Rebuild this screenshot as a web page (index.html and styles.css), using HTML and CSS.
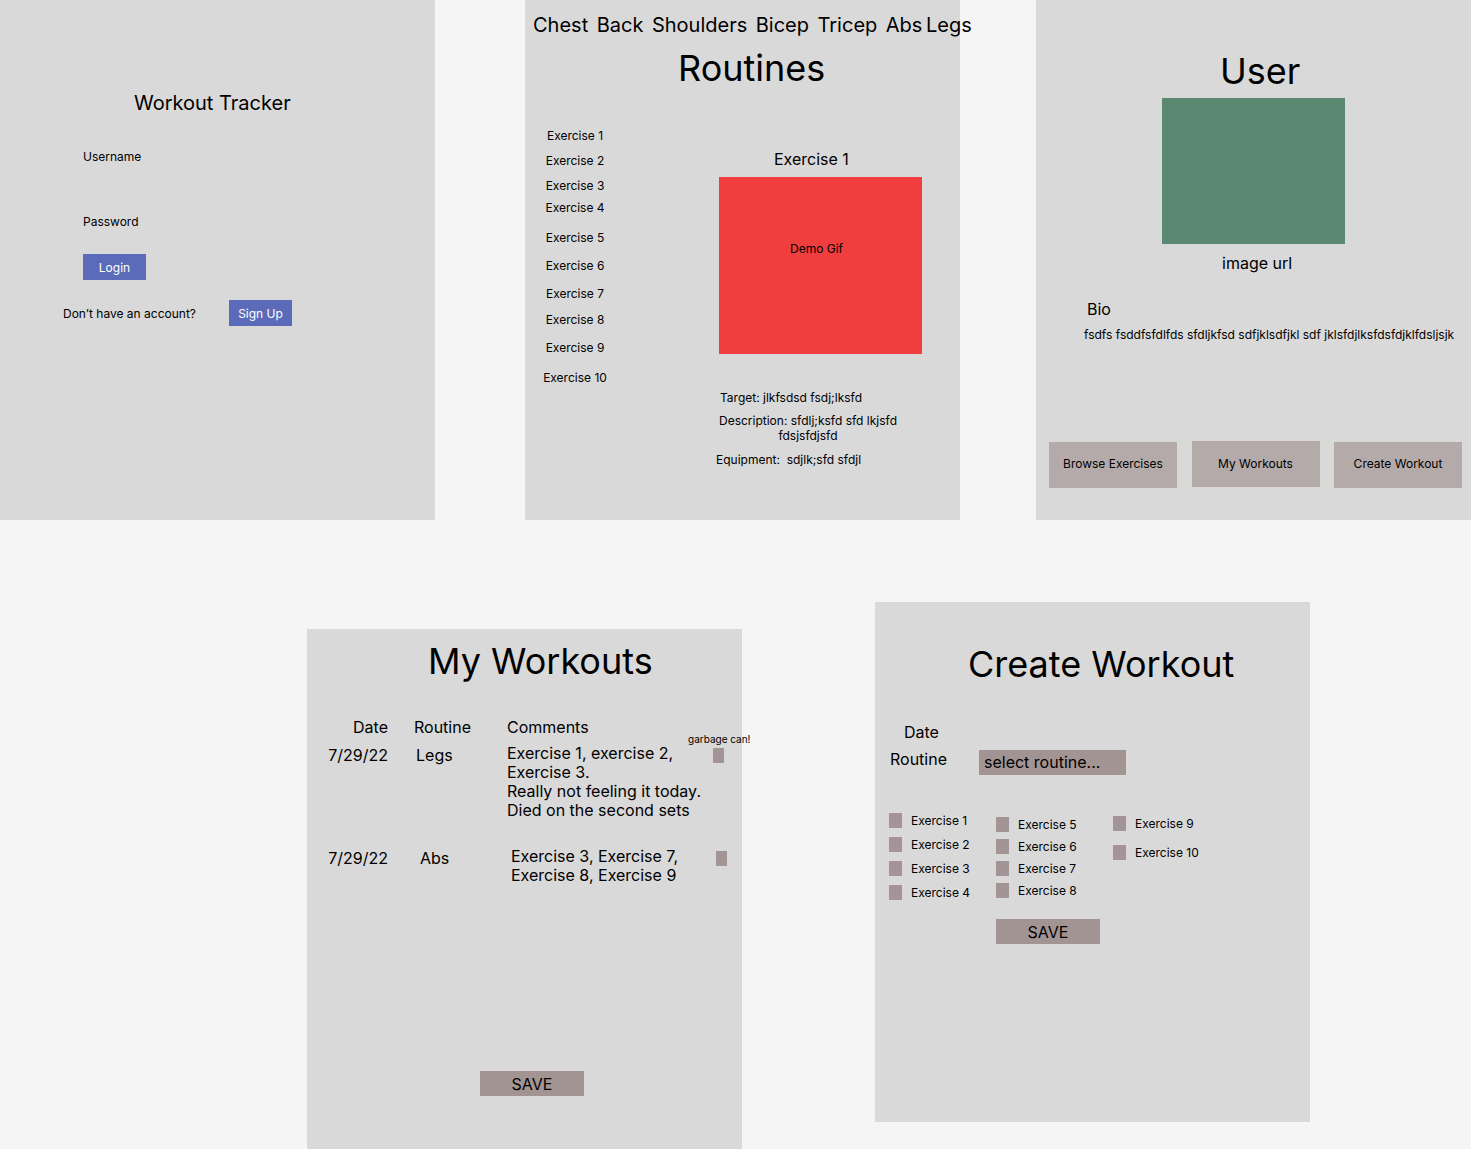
FILE: index.html
```html
<!DOCTYPE html>
<html lang="en">
<head>
    <meta charset="UTF-8">
    <meta name="viewport" content="width=device-width, initial-scale=1.0">
    <title>Workout Tracker - wireframes</title>
    <link rel="stylesheet" href="styles.css">
</head>
<body>
    <div class="canvas">

        <!-- login -->
        <section class="frame frame-login">
            <h2 class="login-title">Workout Tracker</h2>
            <label class="field-label">Username</label>
            <label class="field-label password">Password</label>
            <button class="btn-blue login-btn">Login</button>
            <div class="signup-row">
                <span>Don’t have an account?</span>
                <button class="btn-blue">Sign Up</button>
            </div>
        </section>

        <!-- routines -->
        <section class="frame frame-routines">
            <nav class="tabs">
                <span>Chest</span>
                <span>Back</span>
                <span>Shoulders</span>
                <span>Bicep</span>
                <span>Tricep</span>
                <span>Abs</span>
                <span class="tab-legs">Legs</span>
            </nav>
            <h1 class="routines-title">Routines</h1>
            <div class="routine-body">
                <ul class="exercise-list">
                    <li>Exercise 1</li>
                    <li>Exercise 2</li>
                    <li>Exercise 3</li>
                    <li>Exercise 4</li>
                    <li>Exercise 5</li>
                    <li>Exercise 6</li>
                    <li>Exercise 7</li>
                    <li>Exercise 8</li>
                    <li>Exercise 9</li>
                    <li>Exercise 10</li>
                </ul>
                <div class="exercise-detail">
                    <h3 class="detail-name">Exercise 1</h3>
                    <div class="demo-gif">Demo Gif</div>
                    <p class="detail-target">Target: jlkfsdsd fsdj;lksfd</p>
                    <p class="detail-desc">Description: sfdlj;ksfd sfd lkjsfd<br>fdsjsfdjsfd</p>
                    <p class="detail-equip">Equipment:  sdjlk;sfd sfdjl</p>
                </div>
            </div>
        </section>

        <!-- user profile -->
        <section class="frame frame-user">
            <h1 class="user-title">User</h1>
            <div class="avatar"></div>
            <p class="image-url">image url</p>
            <p class="bio-label">Bio</p>
            <p class="bio-text">fsdfs fsddfsfdlfds sfdljkfsd sdfjklsdfjkl sdf jklsfdjlksfdsfdjklfdsljsjk</p>
            <div class="user-nav">
                <button class="nav-btn">Browse Exercises</button>
                <button class="nav-btn raised">My Workouts</button>
                <button class="nav-btn">Create Workout</button>
            </div>
        </section>

        <!-- my workouts -->
        <section class="frame frame-workouts">
            <h1 class="workouts-title">My Workouts</h1>
            <div class="log">
                <div class="log-row log-head">
                    <span class="log-date">Date</span>
                    <span>Routine</span>
                    <span>Comments</span>
                </div>
                <div class="log-row">
                    <span class="log-date">7/29/22</span>
                    <span class="log-routine">Legs</span>
                    <span>Exercise 1, exercise 2,<br>Exercise 3.<br>Really not feeling it today.<br>Died on the second sets</span>
                    <span class="trash"><span class="trash-note">garbage can!</span></span>
                </div>
                <div class="log-row offset">
                    <span class="log-date">7/29/22</span>
                    <span class="log-routine">Abs</span>
                    <span>Exercise 3, Exercise 7,<br>Exercise 8, Exercise 9</span>
                    <span class="trash"></span>
                </div>
            </div>
            <button class="btn-save workouts-save">SAVE</button>
        </section>

        <!-- create workout -->
        <section class="frame frame-create">
            <h1 class="create-title">Create Workout</h1>
            <p class="create-date">Date</p>
            <div class="routine-row">
                <span>Routine</span>
                <div class="select-box">select routine...</div>
            </div>
            <div class="check-grid">
                <div class="check-col">
                    <label class="check"><span class="box"></span>Exercise 1</label>
                    <label class="check"><span class="box"></span>Exercise 2</label>
                    <label class="check"><span class="box"></span>Exercise 3</label>
                    <label class="check"><span class="box"></span>Exercise 4</label>
                </div>
                <div class="check-col col-mid">
                    <label class="check"><span class="box"></span>Exercise 5</label>
                    <label class="check"><span class="box"></span>Exercise 6</label>
                    <label class="check"><span class="box"></span>Exercise 7</label>
                    <label class="check"><span class="box"></span>Exercise 8</label>
                </div>
                <div class="check-col col-last">
                    <label class="check"><span class="box"></span>Exercise 9</label>
                    <label class="check"><span class="box"></span>Exercise 10</label>
                </div>
            </div>
            <button class="btn-save create-save">SAVE</button>
        </section>

    </div>
</body>
</html>
```

FILE: styles.css
```css
* {
    box-sizing: border-box;
}
body {
    margin: 0;
    font-family: Inter, "Noto Sans", sans-serif;
    color: #000;
    background-color: #f5f5f5;
}
h1, h2, h3, p, ul {
    margin: 0;
    font-weight: 400;
}
button {
    font-family: inherit;
    border: none;
    padding: 0;
    color: inherit;
    cursor: pointer;
}
.canvas {
    position: relative;
    width: 1471px;
    height: 1149px;
    overflow: hidden;
}

/* frames sit on the canvas like artboards */
.frame {
    position: absolute;
    width: 435px;
    height: 520px;
    background-color: #d9d9d9;
    display: flex;
    flex-direction: column;
    align-items: flex-start;
}
.frame-login { left: 0; top: 0; }
.frame-routines { left: 525px; top: 0; }
.frame-user { left: 1036px; top: 0; }
.frame-workouts { left: 307px; top: 629px; }
.frame-create { left: 875px; top: 602px; }

/* login */
.login-title {
    font-size: 20px;
    line-height: 24px;
    margin: 91px 0 0 134px;
}
.field-label {
    font-size: 12px;
    line-height: 15px;
    margin: 34px 0 0 83px;
}
.field-label.password {
    margin-top: 50px;
}
.btn-blue {
    width: 63px;
    height: 26px;
    background-color: #5c6bb9;
    color: #fff;
    font-size: 12px;
}
.login-btn {
    margin: 25px 0 0 83px;
}
.signup-row {
    display: flex;
    align-items: center;
    margin: 20px 0 0 63px;
    font-size: 12px;
}
.signup-row span {
    width: 166px;
}

/* routines */
.tabs {
    display: flex;
    gap: 8.5px;
    margin: 13px 0 0 8px;
    font-size: 20px;
    line-height: 24px;
    white-space: nowrap;
}
.tab-legs {
    margin-left: -5px;
}
.routines-title {
    font-size: 36px;
    line-height: 44px;
    margin: 9px 0 0 153px;
}
.routine-body {
    display: flex;
}
.exercise-list {
    list-style: none;
    padding: 0;
    margin-top: 38px;
    width: 100px;
    text-align: center;
    font-size: 12px;
    line-height: 15px;
}
.exercise-list li {
    margin-top: 13px;
}
.exercise-list li:first-child { margin-top: 0; }
.exercise-list li:nth-child(2),
.exercise-list li:nth-child(3) { margin-top: 10px; }
.exercise-list li:nth-child(4) { margin-top: 7px; }
.exercise-list li:nth-child(5),
.exercise-list li:nth-child(10) { margin-top: 15px; }
.exercise-list li:nth-child(8) { margin-top: 11px; }

.exercise-detail {
    margin-left: 94px;
    width: 203px;
    font-size: 12px;
    line-height: 15px;
}
.detail-name {
    font-size: 16px;
    line-height: 20px;
    margin: 59px 0 0 55px;
}
.demo-gif {
    height: 177px;
    margin-top: 8px;
    background-color: #f03e3e;
    text-align: center;
    padding: 64px 8px 0 0;
}
.detail-target {
    margin: 36px 0 0 1px;
}
.detail-desc {
    width: 200px;
    margin: 8px 0 0 -11px;
    text-align: center;
    white-space: nowrap;
}
.detail-equip {
    margin: 9px 0 0 -3px;
    white-space: pre;
}

/* user */
.user-title {
    font-size: 36px;
    line-height: 44px;
    margin: 49px 0 0 184px;
}
.avatar {
    width: 183px;
    height: 146px;
    margin: 5px 0 0 126px;
    background-color: #5b8870;
}
.image-url {
    font-size: 16px;
    line-height: 20px;
    margin: 9px 0 0 186px;
}
.bio-label {
    font-size: 16px;
    line-height: 20px;
    margin: 26px 0 0 51px;
}
.bio-text {
    font-size: 12px;
    line-height: 15px;
    margin: 8px 0 0 48px;
    white-space: nowrap;
}
.user-nav {
    display: flex;
    align-items: flex-start;
    gap: 14.5px;
    margin: 100px 0 0 13px;
}
.nav-btn {
    width: 128px;
    height: 46px;
    padding-bottom: 3px;
    background-color: #b5aaaa;
    font-size: 12px;
}
.nav-btn.raised {
    margin-top: -1px;
    padding-bottom: 1px;
}

/* my workouts */
.workouts-title {
    font-size: 36px;
    line-height: 44px;
    margin: 10px 0 0 121px;
}
.log {
    margin-top: 34px;
    font-size: 16px;
    line-height: 19px;
    width: 100%;
}
.log-row {
    display: grid;
    grid-template-columns: 107px 93px 206px 11px;
    margin-top: 27px;
}
.log-head {
    line-height: 20px;
    margin-top: 0;
}
.log-head + .log-row {
    margin-top: 7px;
}
.log-date {
    text-align: right;
    padding-right: 26px;
}
.log-row:not(.log-head) .log-date,
.log-routine {
    padding-top: 2px;
}
.log-routine {
    padding-left: 2px;
}
.log-row.offset {
    grid-template-columns: 111px 93px 205px 11px;
}
.log-row.offset .log-date {
    padding-right: 30px;
}
.trash {
    position: relative;
    height: 15px;
    margin-top: 4px;
    background-color: #a39595;
}
.trash-note {
    position: absolute;
    left: -25px;
    top: -15px;
    font-size: 10px;
    line-height: 12px;
    white-space: nowrap;
}
.btn-save {
    width: 104px;
    height: 25px;
    background-color: #a39494;
    font-size: 16px;
}
.workouts-save {
    margin: auto 0 53px 173px;
}

/* create workout */
.create-title {
    font-size: 36px;
    line-height: 44px;
    margin: 40px 0 0 93px;
}
.create-date {
    font-size: 16px;
    line-height: 20px;
    margin: 36px 0 0 29px;
}
.routine-row {
    display: flex;
    align-items: flex-start;
    margin: 8px 0 0 15px;
    font-size: 16px;
}
.routine-row span {
    width: 89px;
    line-height: 20px;
    margin-top: -1px;
}
.select-box {
    width: 147px;
    height: 25px;
    line-height: 25px;
    padding-left: 5px;
    background-color: #a39494;
}
.check-grid {
    display: flex;
    margin: 38px 0 0 14px;
    font-size: 12px;
    line-height: 15px;
}
.check-col {
    display: flex;
    flex-direction: column;
    gap: 9px;
    width: 107px;
}
.check-col.col-mid {
    margin-top: 4px;
    gap: 7px;
    width: 117px;
}
.check-col.col-last {
    margin-top: 3px;
    gap: 14px;
}
.check {
    display: flex;
    align-items: center;
    gap: 9px;
}
.box {
    width: 13px;
    height: 15px;
    background-color: #a39595;
}
.create-save {
    margin: 19px 0 0 121px;
}
```
